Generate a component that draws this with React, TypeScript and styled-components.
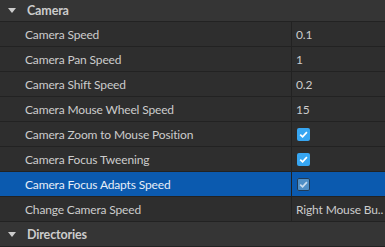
import React from "react";
import styled, { createGlobalStyle } from "styled-components";

const GlobalStyle = createGlobalStyle`
  html, body {
    margin: 0;
    padding: 0;
    background: #2e2e2e;
  }
  body {
    font-family: "Lato", "Noto Sans", sans-serif;
    font-size: 12px;
    letter-spacing: -0.15px;
    color: #cccccc;
  }
`;

const Panel = styled.div`
  width: 385px;
  height: 247px;
  overflow: hidden;
  background: #2e2e2e;
  display: flex;
  flex-direction: column;
`;

const Section = styled.div`
  height: 24px;
  flex: none;
  display: flex;
  align-items: center;
  background: #353535;
  border-bottom: 1px solid #222222;
  font-weight: bold;
  font-size: 12.5px;
  color: #cccccc;
  &:first-child {
    height: 21px;
  }
`;

const Arrow = styled.span`
  width: 0;
  height: 0;
  margin-left: 8px;
  margin-right: 11px;
  border-left: 4px solid transparent;
  border-right: 4px solid transparent;
  border-top: 5px solid #cccccc;
`;

const Row = styled.div<{ $selected?: boolean }>`
  height: 24px;
  flex: none;
  display: grid;
  grid-template-columns: 291px 1fr;
  border-bottom: 1px solid #222222;
  background: ${(p) => (p.$selected ? "#0b5aaf" : "#2e2e2e")};
  color: ${(p) => (p.$selected ? "#e6eef8" : "#cccccc")};
`;

const Label = styled.div`
  padding-left: 25px;
  display: flex;
  align-items: center;
  white-space: nowrap;
  overflow: hidden;
`;

const Value = styled.div`
  border-left: 1px solid #222222;
  padding-left: 4px;
  display: flex;
  align-items: center;
  white-space: nowrap;
  overflow: hidden;
`;

const Check = styled.span<{ $dim?: boolean }>`
  width: 13px;
  height: 13px;
  margin-left: 1px;
  border-radius: 2px;
  background: ${(p) => (p.$dim ? "#4f8fc6" : "#37a6f2")};
  box-shadow: ${(p) => (p.$dim ? "inset 0 0 0 1px #1f3a57" : "none")};
  display: flex;
  align-items: center;
  justify-content: center;
`;

const Tick = ({ dim }: { dim?: boolean }) => (
  <svg width="11" height="11" viewBox="0 0 11 11">
    <path
      d="M2.2 5.6 L4.6 7.9 L8.9 3.1"
      fill="none"
      stroke={dim ? "#c8dcee" : "#ffffff"}
      strokeWidth="1.7"
    />
  </svg>
);

type Prop = { name: string; value?: string; check?: boolean; selected?: boolean };

const props: Prop[] = [
  { name: "Camera Speed", value: "0.1" },
  { name: "Camera Pan Speed", value: "1" },
  { name: "Camera Shift Speed", value: "0.2" },
  { name: "Camera Mouse Wheel Speed", value: "15" },
  { name: "Camera Zoom to Mouse Position", check: true },
  { name: "Camera Focus Tweening", check: true },
  { name: "Camera Focus Adapts Speed", check: true, selected: true },
  { name: "Change Camera Speed", value: "Right Mouse Bu.." },
];

export default function App() {
  return (
    <>
      <GlobalStyle />
      <Panel>
        <Section>
          <Arrow />
          Camera
        </Section>
        {props.map((el) => (
          <Row key={el.name} $selected={el.selected}>
            <Label>{el.name}</Label>
            <Value>
              {el.check ? (
                <Check $dim={el.selected}>
                  <Tick dim={el.selected} />
                </Check>
              ) : (
                el.value
              )}
            </Value>
          </Row>
        ))}
        <Section>
          <Arrow />
          Directories
        </Section>
      </Panel>
    </>
  );
}
